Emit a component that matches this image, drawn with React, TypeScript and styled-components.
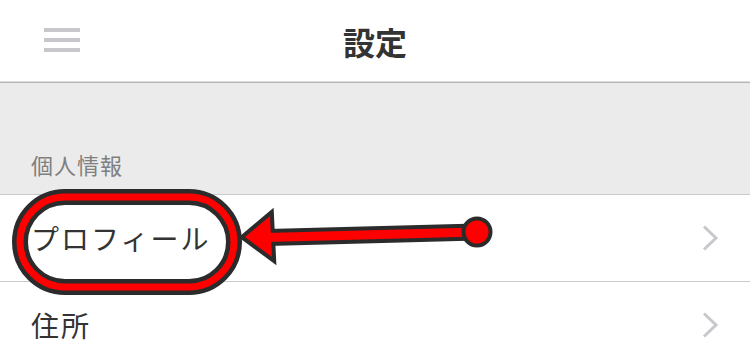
import React from 'react';
import styled, { createGlobalStyle } from 'styled-components';

const GlobalStyle = createGlobalStyle`
  html, body {
    margin: 0;
    padding: 0;
    background: #ffffff;
  }
  body {
    font-family: "Noto Sans CJK JP", "Noto Sans", sans-serif;
    width: 750px;
    height: 347px;
    overflow: hidden;
  }
`;

const Screen = styled.div`
  position: relative;
  width: 750px;
  height: 347px;
  overflow: hidden;
  background: #ffffff;
`;

const Header = styled.header`
  height: 81px;
  display: grid;
  grid-template-columns: 120px 1fr 120px;
  align-items: center;
  border-bottom: 1px solid #dedede;
  box-shadow: 0 1px 0 #b4b4b4;
  margin-bottom: 1px;
`;

const MenuButton = styled.div`
  display: flex;
  flex-direction: column;
  gap: 6px;
  width: 36px;
  margin-left: 44px;
  margin-top: -2px;
`;

const MenuBar = styled.span`
  display: block;
  height: 4px;
  background: #c8c8cc;
`;

const Title = styled.h1`
  margin: 0;
  text-align: center;
  font-size: 32px;
  font-weight: 700;
  color: #333333;
  letter-spacing: 0;
`;

const SectionHeader = styled.div`
  height: 112px;
  background: #ebebeb;
  display: flex;
  align-items: flex-end;
  padding: 0 31px 14px;
  box-sizing: border-box;
  border-bottom: 1px solid #cacaca;
  font-size: 22px;
  color: #7f7f7f;
  letter-spacing: 1px;
`;

const Row = styled.div`
  height: 87px;
  display: flex;
  align-items: center;
  justify-content: space-between;
  padding: 0 30px 0 31px;
  box-sizing: border-box;
  border-bottom: 1px solid #cacaca;
`;

const RowLabel = styled.span`
  font-size: 28px;
  color: #333333;
  letter-spacing: 2px;
`;

const Chevron = () => (
  <svg width="18" height="26" viewBox="0 0 18 26">
    <path d="M2 1.5 L14 13 L2 24.5" fill="none" stroke="#c7c7cc" strokeWidth="3" />
  </svg>
);

const Overlay = styled.svg`
  position: absolute;
  left: 0;
  top: 0;
  pointer-events: none;
`;

const Annotation = () => (
  <Overlay width="750" height="347" viewBox="0 0 750 347">
    {/* pill around the row label */}
    <rect x="20" y="197" width="214" height="90" rx="45" fill="none" stroke="#2b2b2b" strokeWidth="16" />
    <rect x="20" y="197" width="214" height="90" rx="45" fill="none" stroke="#ff0000" strokeWidth="7" />
    {/* arrow: outlines first, then red fill on top */}
    <line x1="268" y1="237.5" x2="477" y2="232" stroke="#2b2b2b" strokeWidth="17" />
    <path d="M245 237 L270 216 L272 257 Z" fill="#2b2b2b" stroke="#2b2b2b" strokeWidth="8" strokeLinejoin="miter" />
    <path d="M245 237 L270 216 L272 257 Z" fill="#ff0000" />
    <line x1="266" y1="237.5" x2="477" y2="232" stroke="#ff0000" strokeWidth="9" />
    <circle cx="477" cy="232" r="13.5" fill="#ff0000" stroke="#2b2b2b" strokeWidth="4" />
  </Overlay>
);

const App: React.FC = () => {
  return (
    <>
      <GlobalStyle />
      <Screen>
        <Header>
          <MenuButton>
            <MenuBar />
            <MenuBar />
            <MenuBar />
          </MenuButton>
          <Title>設定</Title>
          <div />
        </Header>
        <SectionHeader>個人情報</SectionHeader>
        <Row>
          <RowLabel>プロフィール</RowLabel>
          <Chevron />
        </Row>
        <Row>
          <RowLabel>住所</RowLabel>
          <Chevron />
        </Row>
        <Annotation />
      </Screen>
    </>
  );
};

export default App;
